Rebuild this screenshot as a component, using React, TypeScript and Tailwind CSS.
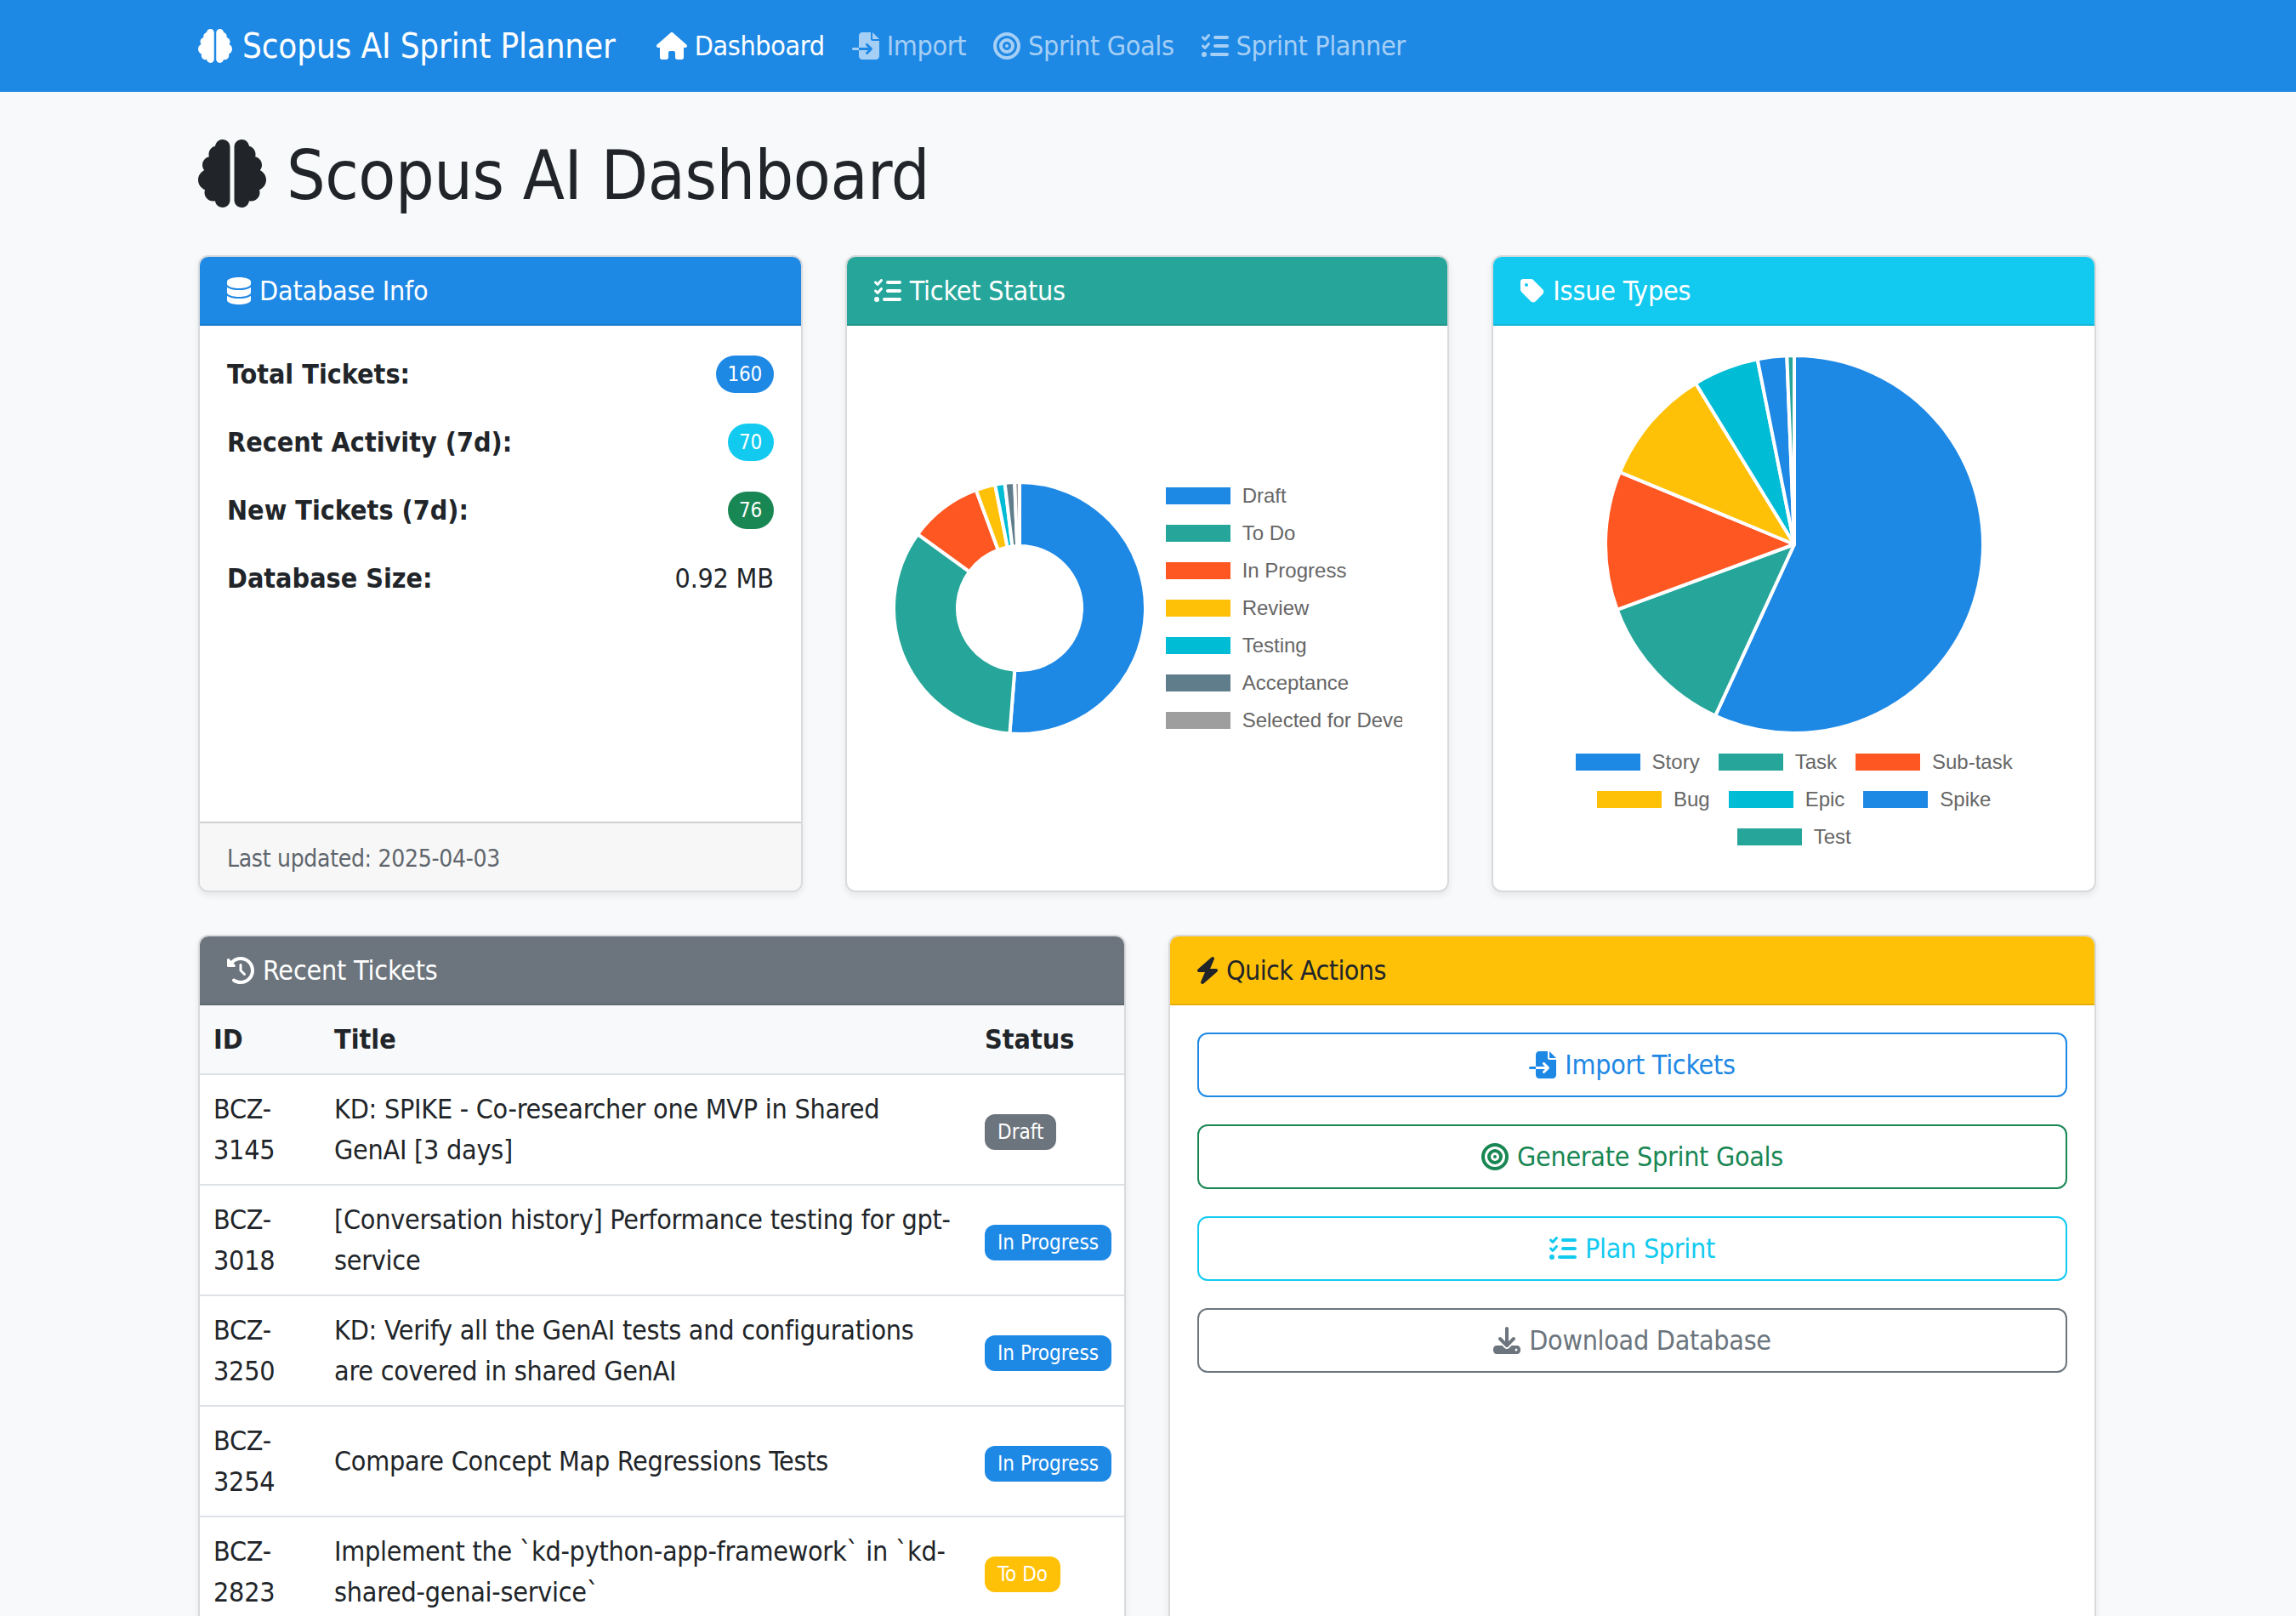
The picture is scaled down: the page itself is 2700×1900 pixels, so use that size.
import type { ReactNode } from "react";
import {
  FaBolt,
  FaBrain,
  FaBullseye,
  FaClockRotateLeft,
  FaDatabase,
  FaDownload,
  FaFileImport,
  FaHouse,
  FaListCheck,
  FaTag,
} from "react-icons/fa6";

const palette = ["#1e88e5", "#26a69a", "#ff5722", "#ffc107", "#00bcd4", "#607d8b", "#9e9e9e"];

const statusData = [
  { label: "Draft", value: 82, color: palette[0] },
  { label: "To Do", value: 54, color: palette[1] },
  { label: "In Progress", value: 15, color: palette[2] },
  { label: "Review", value: 4, color: palette[3] },
  { label: "Testing", value: 2, color: palette[4] },
  { label: "Acceptance", value: 2, color: palette[5] },
  { label: "Selected for Development", value: 1, color: palette[6] },
];

const typeData = [
  { label: "Story", value: 91, color: "#1e88e5" },
  { label: "Task", value: 20, color: "#26a69a" },
  { label: "Sub-task", value: 19, color: "#ff5722" },
  { label: "Bug", value: 16, color: "#ffc107" },
  { label: "Epic", value: 9, color: "#00bcd4" },
  { label: "Spike", value: 4, color: "#1e88e5" },
  { label: "Test", value: 1, color: "#26a69a" },
];

const tickets = [
  { id: "BCZ-3145", title: "KD: SPIKE - Co-researcher one MVP in Shared GenAI [3 days]", status: "Draft", cls: "bg-[#6c757d]" },
  { id: "BCZ-3018", title: "[Conversation history] Performance testing for gpt-service", status: "In Progress", cls: "bg-[#1e88e5]" },
  { id: "BCZ-3250", title: "KD: Verify all the GenAI tests and configurations are covered in shared GenAI", status: "In Progress", cls: "bg-[#1e88e5]" },
  { id: "BCZ-3254", title: "Compare Concept Map Regressions Tests", status: "In Progress", cls: "bg-[#1e88e5]" },
  { id: "BCZ-2823", title: "Implement the `kd-python-app-framework` in `kd-shared-genai-service`", status: "To Do", cls: "bg-[#ffc107]" },
];

function Slices({ data, r, inner, c }: { data: typeof statusData; r: number; inner: number; c: number }) {
  const total = data.reduce((sum, d) => sum + d.value, 0);
  let angle = 0;
  const pt = (rad: number, a: number) => {
    const t = (a * Math.PI) / 180;
    return `${c + rad * Math.sin(t)} ${c - rad * Math.cos(t)}`;
  };
  return (
    <>
      {data.map((d) => {
        const start = angle;
        const end = angle + (d.value / total) * 360;
        angle = end;
        const large = end - start > 180 ? 1 : 0;
        const path = inner
          ? `M${pt(r, start)}A${r} ${r} 0 ${large} 1 ${pt(r, end)}L${pt(inner, end)}A${inner} ${inner} 0 ${large} 0 ${pt(inner, start)}Z`
          : `M${c} ${c}L${pt(r, start)}A${r} ${r} 0 ${large} 1 ${pt(r, end)}Z`;
        return <path key={d.label} d={path} fill={d.color} stroke="#fff" strokeWidth="4" strokeLinejoin="round" />;
      })}
    </>
  );
}

function LegendItem({ label, color }: { label: string; color: string }) {
  return (
    <div className="flex items-center gap-[14px] h-[24px]">
      <span className="w-[76px] h-[20px] shrink-0" style={{ backgroundColor: color }} />
      <span className="whitespace-nowrap">{label}</span>
    </div>
  );
}

function Card({ title, icon, header, children, className, titleCls }: { title: string; icon: ReactNode; header: string; children: ReactNode; className?: string; titleCls?: string }) {
  return (
    <div className={`flex flex-col bg-white border-2 border-[#d9dadb] rounded-[12px] overflow-hidden shadow-[0_4px_8px_rgba(0,0,0,0.075)] ${className ?? ""}`}>
      <div className={`flex items-center gap-[10px] shrink-0 h-[81px] px-[32px] border-b-2 border-black/10 ${header}`}>
        {icon}
        <span className={titleCls ?? "tracking-[-0.2px]"}>{title}</span>
      </div>
      {children}
    </div>
  );
}

function NavItem({ icon, label, active }: { icon: ReactNode; label: string; active?: boolean }) {
  return (
    <a className={`flex items-center gap-[9px] px-[16px] tracking-[-0.35px] ${active ? "text-white" : "text-[#a5cff5]"}`}>
      {icon}
      <span>{label}</span>
    </a>
  );
}

function StatRow({ label, children }: { label: string; children: ReactNode }) {
  return (
    <div className="flex items-center justify-between h-[48px] mb-[32px]">
      <span className="font-bold tracking-normal">{label}</span>
      {children}
    </div>
  );
}

function Pill({ value, cls }: { value: number; cls: string }) {
  return <span className={`px-[13.6px] py-[10px] rounded-full text-[24px] leading-none text-white ${cls}`}>{value}</span>;
}

function ActionButton({ icon, label, cls }: { icon: ReactNode; label: string; cls: string }) {
  return (
    <button className={`flex items-center justify-center gap-[10px] w-full h-[76px] border-2 rounded-[12px] tracking-[-0.3px] ${cls}`}>
      {icon}
      <span>{label}</span>
    </button>
  );
}

export default function App() {
  return (
    <div className="h-[1900px] overflow-hidden bg-[#f8f9fa] text-[#212529] text-[32px] leading-[48px] tracking-[-0.25px] font-['DejaVu_Sans_Condensed','DejaVu_Sans',sans-serif]">
      <nav className="h-[108px] bg-[#1e88e5]">
        <div className="w-[2232px] ml-[233px] h-full flex items-center">
          <a className="flex items-center gap-[12px] text-white text-[40px] tracking-[-0.15px] mr-[32px]">
            <FaBrain />
            <span>Scopus AI Sprint Planner</span>
          </a>
          <NavItem active icon={<FaHouse className="w-[36px]" />} label="Dashboard" />
          <NavItem icon={<FaFileImport />} label="Import" />
          <NavItem icon={<FaBullseye />} label="Sprint Goals" />
          <NavItem icon={<FaListCheck />} label="Sprint Planner" />
        </div>
      </nav>

      <main className="w-[2232px] ml-[233px] pt-[48px]">
        <h1 className="flex items-center gap-[24px] h-[96px] text-[80px] leading-[96px] tracking-[-0.45px] mb-[48px]">
          <FaBrain />
          <span className="pt-[5px]">Scopus AI Dashboard</span>
        </h1>

        <div className="grid grid-cols-3 gap-[50px] h-[749px] mb-[50px]">
          <Card title="Database Info" header="bg-[#1e88e5] text-white" icon={<FaDatabase className="w-[28px]" />}>
            <div className="flex-1 px-[32px] pt-[33px]">
              <StatRow label="Total Tickets:"><Pill value={160} cls="bg-[#1e88e5]" /></StatRow>
              <StatRow label="Recent Activity (7d):"><Pill value={70} cls="bg-[#12caf0]" /></StatRow>
              <StatRow label="New Tickets (7d):"><Pill value={76} cls="bg-[#198754]" /></StatRow>
              <StatRow label="Database Size:"><span>0.92 MB</span></StatRow>
            </div>
            <div className="h-[81px] flex items-center px-[32px] pt-[5px] bg-[#f7f7f7] border-t-2 border-[#d0d0d0] text-[#5f666d] text-[28px] tracking-[-0.3px]">
              Last updated: 2025-04-03
            </div>
          </Card>

          <Card title="Ticket Status" header="bg-[#26a69a] text-white" icon={<FaListCheck />}>
            <div className="flex-1 flex items-center pl-[53px] font-['Liberation_Sans',Arial,sans-serif] tracking-normal text-[24px] leading-[24px] text-[#666666]">
              <svg width="300" height="300" viewBox="0 0 300 300" className="shrink-0">
                <Slices data={statusData} r={148} inner={73} c={150} />
              </svg>
              <div className="flex flex-col gap-[20px] ml-[22px] w-[278px] overflow-hidden">
                {statusData.map((d) => (
                  <LegendItem key={d.label} label={d.label} color={d.color} />
                ))}
              </div>
            </div>
          </Card>

          <Card title="Issue Types" header="bg-[#12caf0] text-white" icon={<FaTag className="w-[28px]" />}>
            <div className="flex-1 flex flex-col items-center pt-[33px] font-['Liberation_Sans',Arial,sans-serif] tracking-normal text-[24px] leading-[24px] text-[#666666]">
              <svg width="448" height="448" viewBox="0 0 448 448" className="shrink-0">
                <Slices data={typeData} r={222} inner={0} c={224} />
              </svg>
              <div className="flex flex-wrap justify-center gap-x-[22px] gap-y-[20px] w-[600px] mt-[20px]">
                {typeData.map((d) => (
                  <LegendItem key={d.label} label={d.label} color={d.color} />
                ))}
              </div>
            </div>
          </Card>
        </div>

        <div className="grid grid-cols-2 gap-[50px] items-start">
          <Card title="Recent Tickets" header="bg-[#6c757d] text-white" icon={<FaClockRotateLeft />}>
            <table className="w-full table-fixed">
              <colgroup>
                <col className="w-[142px]" />
                <col className="w-[765px]" />
                <col />
              </colgroup>
              <thead>
                <tr className="bg-[#f8f9fa] border-b-2 border-[#dee2e6] text-left tracking-normal">
                  <th className="p-[16px]">ID</th>
                  <th className="p-[16px]">Title</th>
                  <th className="p-[16px]">Status</th>
                </tr>
              </thead>
              <tbody>
                {tickets.map((t) => (
                  <tr key={t.id} className="border-b-2 border-[#dee2e6]">
                    <td className="p-[16px]">{t.id}</td>
                    <td className="p-[16px]">{t.title}</td>
                    <td className="p-[16px] pr-0">
                      <span className={`inline-block px-[15px] py-[9px] rounded-[12px] text-[24px] leading-[24px] tracking-normal text-white whitespace-nowrap ${t.cls}`}>{t.status}</span>
                    </td>
                  </tr>
                ))}
              </tbody>
            </table>
          </Card>

          <Card title="Quick Actions" titleCls="tracking-[-0.6px]" header="bg-[#ffc107] text-[#212529]" icon={<FaBolt className="w-[28px] -mx-[2px]" />} className="h-[900px]">
            <div className="flex flex-col gap-[32px] px-[32px] pt-[32px]">
              <ActionButton label="Import Tickets" icon={<FaFileImport />} cls="border-[#1e88e5] text-[#1e88e5]" />
              <ActionButton label="Generate Sprint Goals" icon={<FaBullseye />} cls="border-[#198754] text-[#198754]" />
              <ActionButton label="Plan Sprint" icon={<FaListCheck />} cls="border-[#12caf0] text-[#12caf0]" />
              <ActionButton label="Download Database" icon={<FaDownload />} cls="border-[#6c757d] text-[#6c757d]" />
            </div>
          </Card>
        </div>
      </main>
    </div>
  );
}
